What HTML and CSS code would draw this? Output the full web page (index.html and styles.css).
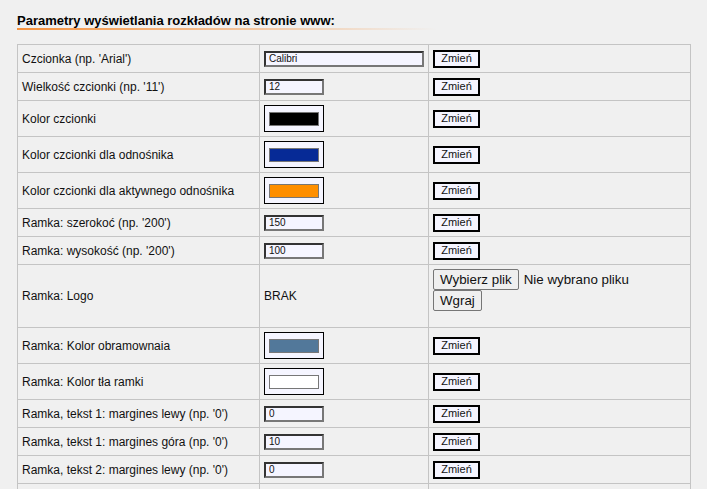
FILE: index.html
```html
<!DOCTYPE html>
<html lang="pl">
<head>
<meta charset="utf-8">
<title>Parametry wyświetlania rozkładów</title>
<link rel="stylesheet" href="styles.css">
</head>
<body>
<h1 class="title">Parametry wyświetlania rozkładów na stronie www:</h1>
<div class="title-line"></div>

<div class="grid">
  <div class="row text-row">
    <div class="cell c1">Czcionka (np. 'Arial')</div>
    <div class="cell c2"><input class="field wide" type="text" value="Calibri"></div>
    <div class="cell c3"><button class="change">Zmień</button></div>
  </div>
  <div class="row text-row">
    <div class="cell c1">Wielkość czcionki (np. '11')</div>
    <div class="cell c2"><input class="field" type="text" value="12"></div>
    <div class="cell c3"><button class="change">Zmień</button></div>
  </div>
  <div class="row color-row">
    <div class="cell c1">Kolor czcionki</div>
    <div class="cell c2"><span class="swatch-box"><span class="swatch sw-black"></span></span></div>
    <div class="cell c3"><button class="change">Zmień</button></div>
  </div>
  <div class="row color-row">
    <div class="cell c1">Kolor czcionki dla odnośnika</div>
    <div class="cell c2"><span class="swatch-box"><span class="swatch sw-blue"></span></span></div>
    <div class="cell c3"><button class="change">Zmień</button></div>
  </div>
  <div class="row color-row">
    <div class="cell c1">Kolor czcionki dla aktywnego odnośnika</div>
    <div class="cell c2"><span class="swatch-box"><span class="swatch sw-orange"></span></span></div>
    <div class="cell c3"><button class="change">Zmień</button></div>
  </div>
  <div class="row text-row">
    <div class="cell c1">Ramka: szerokoć (np. '200')</div>
    <div class="cell c2"><input class="field" type="text" value="150"></div>
    <div class="cell c3"><button class="change">Zmień</button></div>
  </div>
  <div class="row text-row">
    <div class="cell c1">Ramka: wysokość (np. '200')</div>
    <div class="cell c2"><input class="field" type="text" value="100"></div>
    <div class="cell c3"><button class="change">Zmień</button></div>
  </div>
  <div class="row logo-row">
    <div class="cell c1">Ramka: Logo</div>
    <div class="cell c2">BRAK</div>
    <div class="cell c3 upload">
      <div class="file-line">
        <button class="native">Wybierz plik</button>
        <span class="file-status">Nie wybrano pliku</span>
      </div>
      <button class="native">Wgraj</button>
    </div>
  </div>
  <div class="row color-row">
    <div class="cell c1">Ramka: Kolor obramownaia</div>
    <div class="cell c2"><span class="swatch-box"><span class="swatch sw-steel"></span></span></div>
    <div class="cell c3"><button class="change">Zmień</button></div>
  </div>
  <div class="row color-row">
    <div class="cell c1">Ramka: Kolor tła ramki</div>
    <div class="cell c2"><span class="swatch-box"><span class="swatch sw-white"></span></span></div>
    <div class="cell c3"><button class="change">Zmień</button></div>
  </div>
  <div class="row text-row">
    <div class="cell c1">Ramka, tekst 1: margines lewy (np. '0')</div>
    <div class="cell c2"><input class="field" type="text" value="0"></div>
    <div class="cell c3"><button class="change">Zmień</button></div>
  </div>
  <div class="row text-row">
    <div class="cell c1">Ramka, tekst 1: margines góra (np. '0')</div>
    <div class="cell c2"><input class="field" type="text" value="10"></div>
    <div class="cell c3"><button class="change">Zmień</button></div>
  </div>
  <div class="row text-row">
    <div class="cell c1">Ramka, tekst 2: margines lewy (np. '0')</div>
    <div class="cell c2"><input class="field" type="text" value="0"></div>
    <div class="cell c3"><button class="change">Zmień</button></div>
  </div>
  <div class="row text-row">
    <div class="cell c1"></div>
    <div class="cell c2"></div>
    <div class="cell c3"></div>
  </div>
</div>
</body>
</html>
```
FILE: styles.css
```css
html, body {
  overflow: hidden;
}
body {
  margin: 0;
  padding: 0 17px;
  background: #f0f0f0;
  font-family: "Liberation Sans", Arial, sans-serif;
  color: #111;
}
.title {
  margin: 0;
  padding-top: 13px;
  font-size: 13px;
  line-height: 15px;
  font-weight: bold;
  color: #000;
}
.title-line {
  width: 420px;
  height: 2px;
  background: linear-gradient(to right, #f6913c 0%, rgba(246, 145, 60, 0.45) 55%, rgba(246, 145, 60, 0) 100%);
  margin-bottom: 14px;
}
.grid {
  width: 674px;
  box-sizing: border-box;
  border-top: 1px solid #c4c4c4;
  border-left: 1px solid #c4c4c4;
}
.row {
  display: grid;
  grid-template-columns: 242px 169px 262px;
}
.text-row { height: 28px; }
.color-row { height: 36px; }
.logo-row { height: 63px; }
.cell {
  box-sizing: border-box;
  border-right: 1px solid #c4c4c4;
  border-bottom: 1px solid #c4c4c4;
  display: flex;
  align-items: center;
  padding-left: 4px;
  font-size: 12px;
  white-space: nowrap;
}
.field {
  box-sizing: border-box;
  width: 60px;
  height: 16px;
  margin: 0;
  padding: 0 0 0 3px;
  border-style: solid;
  border-width: 2px;
  border-color: #333 #777 #777 #333;
  background: #f5f5ff;
  font-family: "Liberation Sans", Arial, sans-serif;
  font-size: 10px;
  color: #111;
  outline: none;
}
.field.wide { width: 160px; }
.swatch-box {
  box-sizing: border-box;
  width: 60px;
  height: 27px;
  border: 1px solid #000;
  background: #f5f5ff;
  display: flex;
  align-items: center;
  justify-content: center;
}
.swatch {
  box-sizing: border-box;
  width: 50px;
  height: 14px;
  border: 1px solid #777;
}
.sw-black { background: #000; }
.sw-blue { background: #062a96; }
.sw-orange { background: #ff8f00; }
.sw-steel { background: #52789a; }
.sw-white { background: #fff; }
.change {
  box-sizing: border-box;
  width: 47px;
  height: 18px;
  margin: 0;
  padding: 0;
  border: 2px solid #000;
  background: #f5f5ff;
  font-family: "Liberation Sans", Arial, sans-serif;
  font-size: 11px;
  line-height: 13px;
  color: #111;
}
.upload {
  flex-direction: column;
  align-items: flex-start;
  justify-content: flex-start;
  padding-top: 4px;
}
.file-line {
  display: flex;
  align-items: center;
  gap: 5px;
}
.native {
  box-sizing: border-box;
  height: 21px;
  margin: 0;
  padding: 0 6px;
  border: 1px solid #767676;
  border-radius: 2px;
  background: #efefef;
  font-family: "Liberation Sans", Arial, sans-serif;
  font-size: 13.33px;
  color: #111;
}
.file-status {
  font-size: 13.33px;
  color: #111;
}
```
